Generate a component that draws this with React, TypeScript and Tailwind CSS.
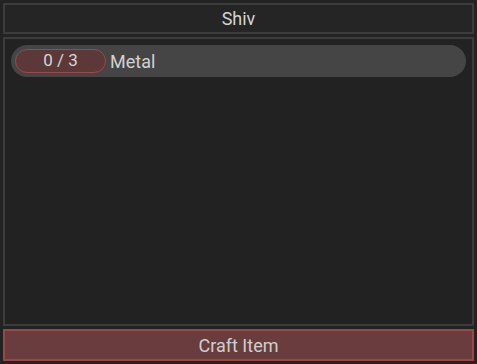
type Requirement = {
  id: string;
  name: string;
  have: number;
  need: number;
};

const requirements: Requirement[] = [{ id: "metal", name: "Metal", have: 0, need: 3 }];

function RequirementRow({ item }: { item: Requirement }) {
  return (
    <li className="flex h-8 items-center gap-1 rounded-full bg-[#454545] px-1">
      <span className="flex h-6 w-[91px] items-center justify-center rounded-full border border-[#9b4a4a] bg-[#5c3838] text-[17px] text-[#d6d6d6]">
        {item.have} / {item.need}
      </span>
      <span className="text-[18px] text-[#d2d2d2]">{item.name}</span>
    </li>
  );
}

export default function App() {
  return (
    <div
      className="flex h-[364px] w-[477px] flex-col gap-[3px] bg-[#232323] p-[3px]"
      style={{ fontFamily: "Roboto, 'Liberation Sans', sans-serif" }}
    >
      <div className="flex h-[31px] items-center justify-center border-2 border-[#3c3c3c] bg-[#252525] text-[18px] text-[#d4d4d4]">
        Shiv
      </div>
      <div className="flex-1 border-2 border-[#3c3c3c] bg-[#222222] p-1.5">
        <ul className="flex flex-col gap-1">
          {requirements.map((item) => (
            <RequirementRow key={item.id} item={item} />
          ))}
        </ul>
      </div>
      <button
        type="button"
        className="h-8 border-2 border-[#9c4646] bg-[#693d3d] text-[18px] text-[#cfcfcf]"
      >
        Craft Item
      </button>
    </div>
  );
}
